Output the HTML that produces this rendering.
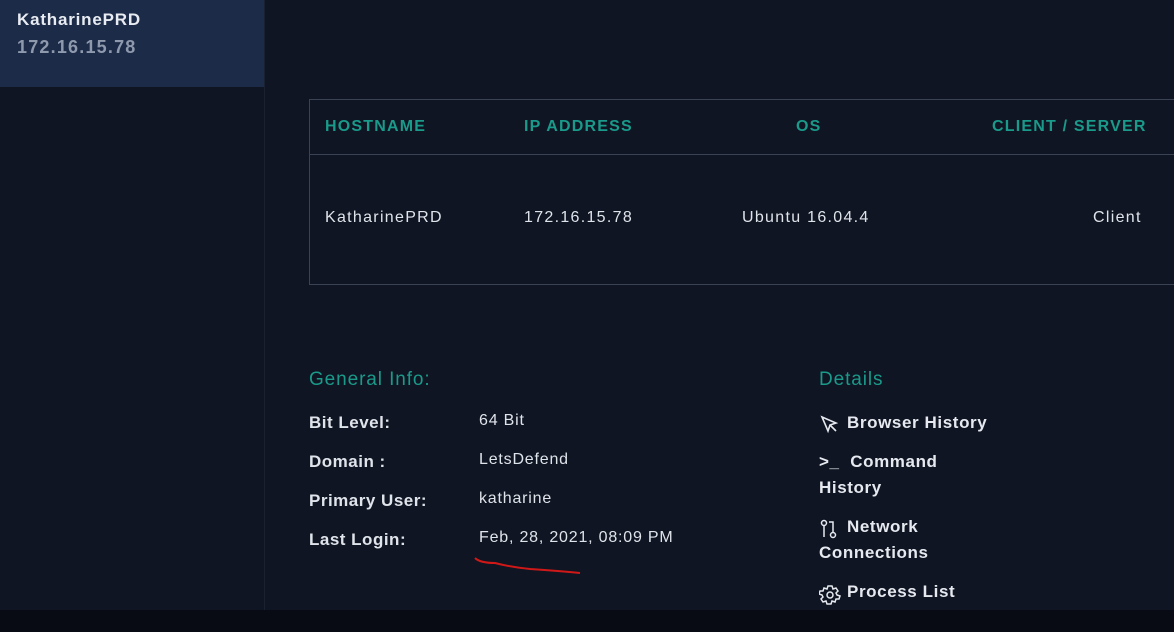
<!DOCTYPE html>
<html><head><style>
body{margin:0;width:1174px;height:632px;background:#0f1522;font-family:"Liberation Sans",sans-serif;position:relative;overflow:hidden;color:#e6e9ef}
.side{position:absolute;left:0;top:0;width:264px;height:610px;border-right:1px solid #1a2130}
.sel{position:absolute;left:0;top:0;width:264px;height:87px;background:#1c2b47}
.t{position:absolute;white-space:nowrap}
.tbl{position:absolute;left:309px;top:99px;width:870px;height:184px;border:1px solid #3a4354}
.hd{position:absolute;left:0;top:54px;width:100%;border-top:1px solid #3a4354}
.h{color:#1a9a8a;font-weight:bold;font-size:16px;letter-spacing:1.2px;top:118px}
.c{font-size:16px;color:#dfe3ea;top:209px;letter-spacing:1.3px}
.lbl{font-size:17px;font-weight:bold;color:#dfe3ea;left:309px;letter-spacing:.5px}
.val{font-size:16px;color:#dfe3ea;left:479px;letter-spacing:.8px}
.lk{font-size:17px;font-weight:bold;color:#e6e9ef;left:819px;letter-spacing:.6px}
.bot{position:absolute;left:0;top:610px;width:1174px;height:22px;background:#080b14}
</style></head><body>
<div class="side"><div class="sel"></div></div>
<div class="t" style="left:17px;top:10px;font-size:17px;font-weight:bold;color:#e8ecf2;letter-spacing:.8px">KatharinePRD</div>
<div class="t" style="left:17px;top:37px;font-size:18px;font-weight:bold;color:#8e99ad;letter-spacing:1.2px">172.16.15.78</div>
<div class="tbl"><div class="hd"></div></div>
<div class="t h" style="left:325px">HOSTNAME</div>
<div class="t h" style="left:524px">IP ADDRESS</div>
<div class="t h" style="left:796px">OS</div>
<div class="t h" style="left:992px">CLIENT / SERVER</div>
<div class="t c" style="left:325px">KatharinePRD</div>
<div class="t c" style="left:524px">172.16.15.78</div>
<div class="t c" style="left:742px">Ubuntu 16.04.4</div>
<div class="t c" style="left:1093px">Client</div>
<div class="t" style="left:309px;top:369px;font-size:19px;color:#1a9a8a;letter-spacing:.9px">General Info:</div>
<div class="t" style="left:819px;top:369px;font-size:19px;color:#1a9a8a;letter-spacing:.9px">Details</div>
<div class="t lbl" style="top:413px">Bit Level:</div>
<div class="t lbl" style="top:452px">Domain :</div>
<div class="t lbl" style="top:491px">Primary User:</div>
<div class="t lbl" style="top:530px">Last Login:</div>
<div class="t val" style="top:412px">64 Bit</div>
<div class="t val" style="top:451px">LetsDefend</div>
<div class="t val" style="top:490px">katharine</div>
<div class="t val" style="top:529px">Feb, 28, 2021, 08:09 PM</div>
<svg style="position:absolute;left:470px;top:555px" width="120" height="22"><path d="M5 3 Q10 8 25 8 Q40 12 60 14 Q90 16 110 18" stroke="#d01818" stroke-width="2" fill="none"/></svg>
<svg style="position:absolute;left:820px;top:415px" width="20" height="20" fill="none" stroke="#e6e9ef" stroke-width="1.6"><path d="M2 2 L16 8 L10 10 L8 16 Z M10 10 L16 16"/></svg>
<div class="t lk" style="left:847px;top:413px">Browser History</div>
<div class="t lk" style="top:452px">&gt;_&nbsp; Command</div>
<div class="t lk" style="top:478px">History</div>
<svg style="position:absolute;left:820px;top:519px" width="22" height="20" fill="none" stroke="#e6e9ef" stroke-width="1.5"><circle cx="4" cy="4" r="2.5"/><path d="M4 7 V18 M9 3 H13 V14"/><circle cx="13" cy="16" r="2.5"/></svg>
<div class="t lk" style="left:847px;top:517px">Network</div>
<div class="t lk" style="top:543px">Connections</div>
<svg style="position:absolute;left:819px;top:584px" width="22" height="22" fill="none" stroke="#e6e9ef" stroke-width="1.5"><circle cx="11" cy="11" r="3"/><path d="M9 2h4l1 3 3-1 2 3-2 2 1 2 3 1v0l-1 3-3 0-1 3-3-1-1 3h-4l-1-3-3 1-2-3 2-2-1-2-3-1 1-3 3 0 1-3 3 1z"/></svg>
<div class="t lk" style="left:847px;top:582px">Process List</div>
<div class="bot"></div>
</body></html>
